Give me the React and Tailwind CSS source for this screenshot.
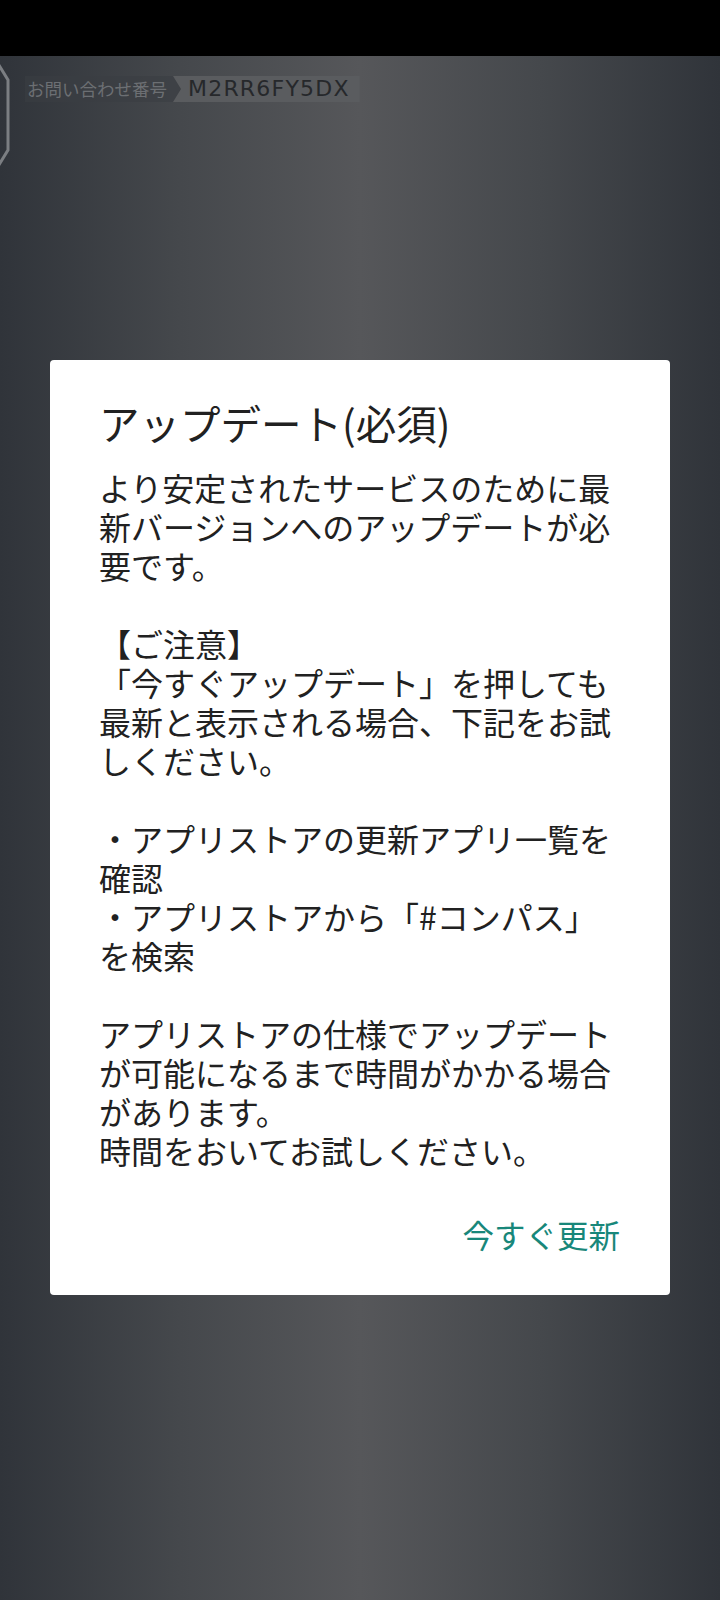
import React from "react";

const jp = "font-['Noto_Sans_CJK_JP','Noto_Sans',sans-serif]";

// 本文は改行位置を固定する
const lines = [
  "より安定されたサービスのために最",
  "新バージョンへのアップデートが必",
  "要です。",
  "",
  "【ご注意】",
  "「今すぐアップデート」を押しても",
  "最新と表示される場合、下記をお試",
  "しください。",
  "",
  "・アプリストアの更新アプリ一覧を",
  "確認",
  "・アプリストアから「#コンパス」",
  "を検索",
  "",
  "アプリストアの仕様でアップデート",
  "が可能になるまで時間がかかる場合",
  "があります。",
  "時間をおいてお試しください。",
];

function Frame() {
  return (
    <svg className="absolute left-0 top-[56px]" width="16" height="120" viewBox="0 0 16 120">
      <path d="M-3 6 L8 24 L8 94 L-3 112" fill="none" stroke="#7b7e82" strokeWidth="3" />
    </svg>
  );
}

export default function App() {
  return (
    <div className="relative w-[720px] h-[1600px] overflow-hidden bg-[linear-gradient(to_right,#30343a_0%,#45484c_25%,#56575a_50%,#45484c_75%,#30343a_100%)]">
      <div className="h-[56px] bg-black" />
      <Frame />

      {/* --- お問い合わせ番号 --- */}
      <div className="flex items-center h-[26px] mt-[20px] ml-[25px]">
        <div className={`h-full flex items-center pl-[2px] pr-[14px] bg-[#3b3e42]/60 text-[17.5px] leading-none text-[#6c6f73] ${jp}`}>
          お問い合わせ番号
        </div>
        <div className="h-full -ml-[8px] flex items-center pl-[15px] pr-[10px] bg-[#5a5c5f] [clip-path:polygon(0_0,100%_0,100%_100%,0_100%,8px_50%)]">
          <span className="font-['DejaVu_Sans',sans-serif] text-[22px] leading-none tracking-[1.2px] text-[#26282b]">
            M2RR6FY5DX
          </span>
        </div>
      </div>

      {/* --- ダイアログ --- */}
      <div className={`mt-[258px] mx-[50px] bg-white rounded-[4px] pt-[39px] pb-[37px] ${jp}`}>
        <h1 className="px-[49px] text-[40.5px] leading-[48px] text-[#212121] whitespace-nowrap">
          アップデート(必須)
        </h1>
        <div className="mt-[21px] px-[49px] text-[32px] leading-[39px] text-[#212121] whitespace-nowrap">
          {lines.map((l, i) => (
            <div key={i} className="h-[39px] flex items-center">{l}</div>
          ))}
        </div>
        <div className="flex justify-end mt-[40px] pr-[50px]">
          <button type="button" className="h-[48px] text-[31.5px] leading-[48px] text-[#18877a]">
            今すぐ更新
          </button>
        </div>
      </div>
    </div>
  );
}
